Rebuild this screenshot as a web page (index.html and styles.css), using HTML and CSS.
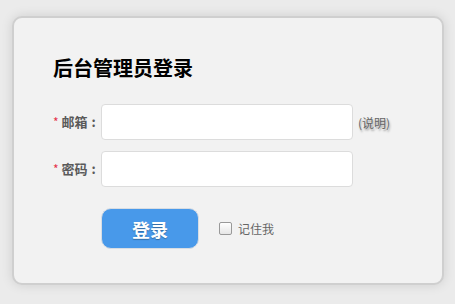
FILE: index.html
```html
<!DOCTYPE html>
<html lang="zh">
<head>
<meta charset="utf-8">
<link rel="stylesheet" href="styles.css">
</head>
<body>
<div class="card">
  <h1 class="title">后台管理员登录</h1>
  <div class="form">
    <label class="label"><span class="req">*</span> 邮箱<span class="colon">:</span></label>
    <input class="field" type="text">
    <span class="hint">(说明)</span>
    <label class="label"><span class="req">*</span> 密码<span class="colon">:</span></label>
    <input class="field" type="password">
    <span></span>
    <span></span>
    <div class="actions">
      <button class="btn">登录</button>
      <label class="remember"><span class="box"></span>记住我</label>
    </div>
  </div>
</div>
</body>
</html>
```
FILE: styles.css
```css
html, body {
  margin: 0;
  padding: 0;
  background: #ebebeb;
  font-family: "Noto Sans CJK SC", "Liberation Sans", sans-serif;
}
body {
  padding: 16px 11px 0 12px;
  height: 304px;
  box-sizing: border-box;
}
.card {
  width: 432px;
  height: 269px;
  box-sizing: border-box;
  background: #f2f2f2;
  border: 2px solid #cfcfcf;
  border-radius: 10px;
  box-shadow: 0 0 12px rgba(0,0,0,0.12);
  padding: 36px 0 0 39px;
}
.title {
  margin: 0;
  font-size: 20px;
  line-height: 28px;
  font-weight: bold;
  color: #000;
}
.form {
  margin-top: 22px;
  display: grid;
  grid-template-columns: 48px 252px auto;
  row-gap: 11px;
  align-items: center;
}
.label {
  font-size: 13px;
  font-weight: bold;
  color: #5a5a5a;
  white-space: nowrap;
  line-height: 18px;
}
.colon {
  margin-left: 4px;
}
.req {
  color: #e5334b;
  font-weight: normal;
  font-size: 12px;
}
.field {
  height: 36px;
  width: 252px;
  box-sizing: border-box;
  border: 1px solid #dcdcdc;
  border-radius: 4px;
  background: #fff;
  margin: 0;
}
.hint {
  margin-left: 5px;
  font-size: 12px;
  color: #666;
  text-shadow: 1px 2px 2px #999;
}
.actions {
  grid-column: 2 / 4;
  display: flex;
  align-items: center;
  margin-top: 10px;
}
.btn {
  width: 98px;
  height: 41px;
  box-sizing: border-box;
  border: 1px solid #d8dde3;
  border-radius: 10px;
  background: #4899ea;
  color: #fff;
  font-family: inherit;
  font-size: 18px;
  font-weight: bold;
  text-shadow: 0 1px 1px rgba(0,0,0,0.3);
  padding: 0;
}
.remember {
  display: flex;
  align-items: center;
  margin-left: 20px;
  font-size: 12px;
  color: #666;
}
.box {
  width: 11px;
  height: 11px;
  border: 1px solid #999;
  border-radius: 2px;
  background: linear-gradient(#fff, #e6e6e6);
  margin-right: 6px;
}
```
